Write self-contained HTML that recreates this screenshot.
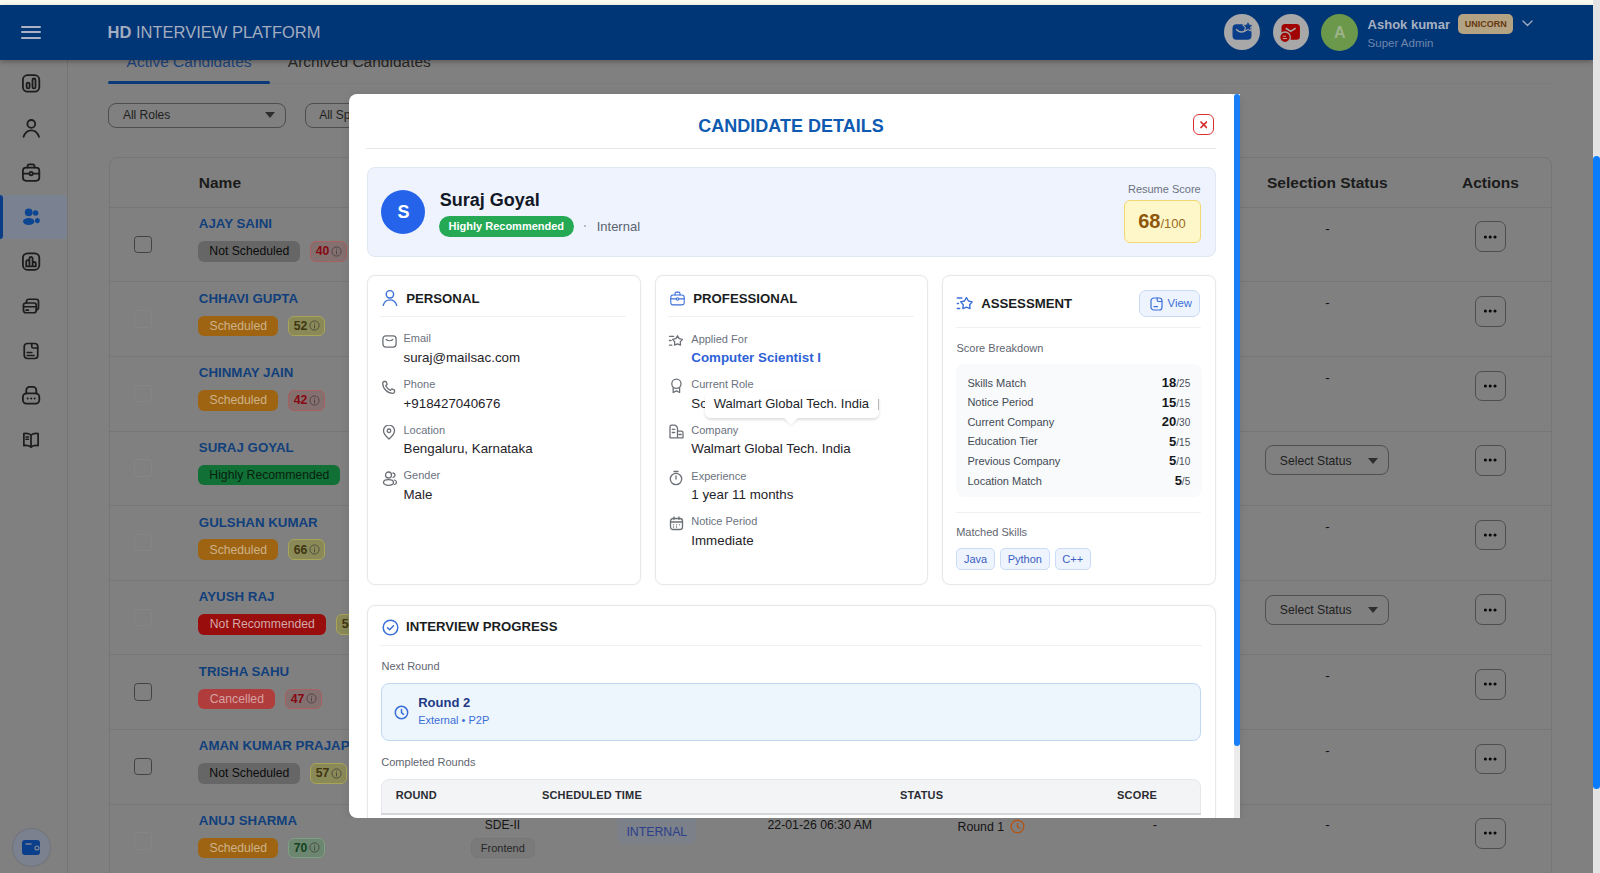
<!DOCTYPE html>
<html><head><meta charset="utf-8"><title>Candidate Details</title>
<style>
html,body{margin:0;padding:0}
body{width:1600px;height:873px;overflow:hidden;position:relative;background:#808080;font-family:"Liberation Sans",sans-serif}
.a{position:absolute;display:block}
.t{position:absolute;line-height:1;white-space:nowrap}
#modal{position:absolute;left:0;top:0;width:1600px;height:818.2px;overflow:hidden}
</style></head><body>
<div id="page">
<div class="a" style="left:67.00px;top:60.00px;width:1.00px;height:813.00px;background:#747474"></div>
<div class="a" style="left:0.00px;top:195.00px;width:67.00px;height:44.00px;background:#7a8291"></div>
<div class="a" style="left:0.00px;top:195.00px;width:3.00px;height:44.00px;background:#0b3d86;border-radius:0 3px 3px 0"></div>
<svg class="a" style="left:14.00px;top:195.00px;" width="36" height="45" viewBox="0 0 36 45" fill="none"><circle cx="14.7" cy="17.3" r="3.9" fill="#0c4591"/><ellipse cx="14.7" cy="26.5" rx="5.7" ry="3.4" fill="#0c4591"/><circle cx="21.6" cy="18" r="2.7" fill="#0c4591"/><ellipse cx="23.4" cy="25.6" rx="2.4" ry="2.7" fill="#0c4591"/></svg>
<svg class="a" style="left:0.00px;top:0.00px;" width="68" height="460" viewBox="0 0 68 460" fill="none"><g stroke="#1c1c1c" stroke-width="1.8" stroke-linecap="round" stroke-linejoin="round"><rect x="22.9" y="75.2" width="16.4" height="16.4" rx="4.6"/><rect x="26.6" y="82.6" width="3" height="5.8" rx="1.5"/><rect x="32.5" y="78.5" width="3" height="9.9" rx="1.5"/><circle cx="31.3" cy="123.9" r="3.9"/><path d="M23.6 136.8c1.4-4.2 4.3-6.5 7.7-6.5s6.3 2.3 7.7 6.5"/><rect x="22.9" y="167.6" width="16.4" height="13.2" rx="3.2"/><path d="M27.6 167.6v-1.6a1.6 1.6 0 0 1 1.6-1.6h3.6a1.6 1.6 0 0 1 1.6 1.6v1.6M23 173.6h16.3"/><circle cx="31.1" cy="173.6" r="1.7" fill="#808080"/><rect x="22.9" y="253.4" width="16.4" height="16.4" rx="4.6"/><path d="M26.2 266.4v-4.6a1.6 1.6 0 0 1 3.2 0v4.6zM29.4 266.4v-8a1.6 1.6 0 0 1 3.2 0v8zM32.6 266.4v-2.8a1.6 1.6 0 0 1 3.2 0v2.8z"/><path d="M26.3 393.4v-3.2a3.3 3.3 0 0 1 3.3-3.3h3.4a3.3 3.3 0 0 1 3.3 3.3v3.2"/><rect x="22.9" y="393.4" width="16.4" height="10.2" rx="3.6"/></g><circle cx="27.7" cy="398.6" r="1" fill="#1c1c1c"/><circle cx="31.2" cy="398.6" r="1" fill="#1c1c1c"/><circle cx="34.6" cy="398.6" r="1" fill="#1c1c1c"/></svg>
<svg class="a" style="left:22.00px;top:297.00px;" width="18" height="18" viewBox="0 0 24 24" fill="none"><rect x="2" y="8" width="17" height="13" rx="3" stroke="#1c1c1c" stroke-width="2.3" stroke-linecap="round" stroke-linejoin="round"/><path d="M6 8V6a3 3 0 0 1 3-3h10a3 3 0 0 1 3 3v8a3 3 0 0 1-3 3M2 13h17M5.5 17.5h3" stroke="#1c1c1c" stroke-width="2.3" stroke-linecap="round" stroke-linejoin="round"/></svg>
<svg class="a" style="left:22.00px;top:341.80px;" width="18" height="18" viewBox="0 0 24 24" fill="none"><rect x="3" y="2" width="18" height="20" rx="4" stroke="#1c1c1c" stroke-width="2.3" stroke-linecap="round" stroke-linejoin="round"/><path d="M13 2v4a2 2 0 0 0 2 2h6M7 14h6M7 18h9" stroke="#1c1c1c" stroke-width="2.3" stroke-linecap="round" stroke-linejoin="round"/></svg>
<svg class="a" style="left:22.00px;top:430.50px;" width="18" height="18" viewBox="0 0 24 24" fill="none"><path d="M12 5.5C9.5 3.5 6 3 2.5 3.5v16c3.5-.5 7 0 9.5 2 2.5-2 6-2.5 9.5-2v-16C18 3 14.5 3.5 12 5.5zM12 5.5v16M5.5 8h3M5.5 11h3" stroke="#1c1c1c" stroke-width="2.3" stroke-linecap="round" stroke-linejoin="round"/></svg>
<div class="a" style="left:11.50px;top:828.00px;width:39.20px;height:38.60px;box-sizing:border-box;background:#7b818f;border-radius:50%;border:1px solid #70747c"></div>
<svg class="a" style="left:21.00px;top:838.00px;" width="20" height="18" viewBox="0 0 20 18" fill="none"><rect x="1" y="2" width="18" height="15" rx="3" fill="#0b3f8c"/><path d="M5 6h5" stroke="#7b8391" stroke-width="1.5" stroke-linecap="round"/><circle cx="16" cy="10" r="2.6" fill="#7b8391"/><circle cx="16" cy="10" r="1.3" fill="#0b3f8c"/></svg>
<div class="t" style="left:126.60px;top:53.88px;font-size:15.5px;font-weight:400;color:#1c437c;">Active Candidates</div>
<div class="t" style="left:287.80px;top:53.88px;font-size:15.5px;font-weight:400;color:#262626;">Archived Candidates</div>
<div class="a" style="left:107.80px;top:82.50px;width:1445.00px;height:1.00px;background:#7c7c7c"></div>
<div class="a" style="left:107.80px;top:81.30px;width:161.80px;height:2.60px;background:#0b397a;border-radius:2px"></div>
<div class="a" style="left:108.40px;top:102.50px;width:177.60px;height:25.00px;box-sizing:border-box;border:1px solid #4e4e4e;border-radius:8px"></div>
<div class="t" style="left:122.90px;top:109.34px;font-size:12px;font-weight:400;color:#1e1e1e;">All Roles</div>
<svg class="a" style="left:264.60px;top:112.00px;" width="10" height="6" viewBox="0 0 10 6" fill="none"><path d="M0 0h10L5 6z" fill="#2e2e2e"/></svg>
<div class="a" style="left:304.70px;top:102.50px;width:177.60px;height:25.00px;box-sizing:border-box;border:1px solid #4e4e4e;border-radius:8px"></div>
<div class="t" style="left:319.20px;top:109.34px;font-size:12px;font-weight:400;color:#1e1e1e;">All Specializations</div>
<svg class="a" style="left:461.00px;top:112.00px;" width="10" height="6" viewBox="0 0 10 6" fill="none"><path d="M0 0h10L5 6z" fill="#2e2e2e"/></svg>
<div class="a" style="left:108.60px;top:156.60px;width:1443.80px;height:760.00px;box-sizing:border-box;border:1px solid #767676;border-radius:8px"></div>
<div class="t" style="left:198.80px;top:174.78px;font-size:15.5px;font-weight:700;color:#1b1b1b;">Name</div>
<div class="t" style="left:1267.00px;top:174.78px;font-size:15.5px;font-weight:700;color:#1b1b1b;">Selection Status</div>
<div class="t" style="left:1462.00px;top:174.78px;font-size:15.5px;font-weight:700;color:#1b1b1b;">Actions</div>
<div class="a" style="left:108.60px;top:206.80px;width:1443.80px;height:1.00px;background:#767676"></div>
<div class="t" style="left:198.80px;top:217.24px;font-size:13.3px;font-weight:700;color:#113f7b;">AJAY SAINI</div>
<div class="a" style="left:133.50px;top:235.50px;width:18.30px;height:17.50px;box-sizing:border-box;border:1.7px solid #424242;border-radius:3.5px"></div>
<div class="a" style="left:198.30px;top:241.00px;width:102.00px;height:20.60px;background:#666666;border-radius:6px"></div>
<div class="t" style="left:-150.70px;width:800px;text-align:center;top:245.17px;font-size:12.2px;font-weight:400;color:#0c0c0c;">Not Scheduled</div>
<div class="a" style="left:310.30px;top:241.00px;width:37.00px;height:20.60px;box-sizing:border-box;background:#857070;border:1px solid #a86060;border-radius:6px"></div>
<div class="t" style="left:315.80px;top:245.17px;font-size:12.2px;font-weight:700;color:#860812;">40</div>
<svg class="a" style="left:331.10px;top:245.60px;opacity:.75" width="11" height="11" viewBox="0 0 11 11" fill="none"><circle cx="5.5" cy="5.5" r="4.6" stroke="#3c3a38" stroke-width="1"/><path d="M5.5 5v3M5.5 3.2v.1" stroke="#3c3a38" stroke-width="1" stroke-linecap="round"/></svg>
<div class="t" style="left:927.40px;width:800px;text-align:center;top:221.67px;font-size:13.5px;font-weight:400;color:#111;">-</div>
<div class="a" style="left:1475.00px;top:221.30px;width:30.70px;height:30.70px;box-sizing:border-box;border:1px solid #4e4e4e;border-radius:7px"></div>
<svg class="a" style="left:1480.00px;top:231.60px;" width="20" height="10" viewBox="0 0 20 10" fill="none"><circle cx="5.4" cy="5" r="1.55" fill="#0a0a0a"/><circle cx="10.2" cy="5" r="1.55" fill="#0a0a0a"/><circle cx="15" cy="5" r="1.55" fill="#0a0a0a"/></svg>
<div class="a" style="left:108.60px;top:281.40px;width:1443.80px;height:1.00px;background:#767676"></div>
<div class="t" style="left:198.80px;top:291.84px;font-size:13.3px;font-weight:700;color:#113f7b;">CHHAVI GUPTA</div>
<div class="a" style="left:133.50px;top:310.10px;width:18.30px;height:17.50px;box-sizing:border-box;border:1.5px solid #858585;border-radius:3px"></div>
<div class="a" style="left:198.30px;top:315.60px;width:80.00px;height:20.60px;background:#9e6411;border-radius:6px"></div>
<div class="t" style="left:-161.70px;width:800px;text-align:center;top:319.77px;font-size:12.2px;font-weight:400;color:#cdb28a;">Scheduled</div>
<div class="a" style="left:288.30px;top:315.60px;width:37.00px;height:20.60px;box-sizing:border-box;background:#8a8958;border:1px solid #a8a458;border-radius:6px"></div>
<div class="t" style="left:293.80px;top:319.77px;font-size:12.2px;font-weight:700;color:#3f3610;">52</div>
<svg class="a" style="left:309.10px;top:320.20px;opacity:.75" width="11" height="11" viewBox="0 0 11 11" fill="none"><circle cx="5.5" cy="5.5" r="4.6" stroke="#3c3a38" stroke-width="1"/><path d="M5.5 5v3M5.5 3.2v.1" stroke="#3c3a38" stroke-width="1" stroke-linecap="round"/></svg>
<div class="t" style="left:927.40px;width:800px;text-align:center;top:296.27px;font-size:13.5px;font-weight:400;color:#111;">-</div>
<div class="a" style="left:1475.00px;top:295.90px;width:30.70px;height:30.70px;box-sizing:border-box;border:1px solid #4e4e4e;border-radius:7px"></div>
<svg class="a" style="left:1480.00px;top:306.20px;" width="20" height="10" viewBox="0 0 20 10" fill="none"><circle cx="5.4" cy="5" r="1.55" fill="#0a0a0a"/><circle cx="10.2" cy="5" r="1.55" fill="#0a0a0a"/><circle cx="15" cy="5" r="1.55" fill="#0a0a0a"/></svg>
<div class="a" style="left:108.60px;top:356.00px;width:1443.80px;height:1.00px;background:#767676"></div>
<div class="t" style="left:198.80px;top:366.44px;font-size:13.3px;font-weight:700;color:#113f7b;">CHINMAY JAIN</div>
<div class="a" style="left:133.50px;top:384.70px;width:18.30px;height:17.50px;box-sizing:border-box;border:1.5px solid #858585;border-radius:3px"></div>
<div class="a" style="left:198.30px;top:390.20px;width:80.00px;height:20.60px;background:#9e6411;border-radius:6px"></div>
<div class="t" style="left:-161.70px;width:800px;text-align:center;top:394.37px;font-size:12.2px;font-weight:400;color:#cdb28a;">Scheduled</div>
<div class="a" style="left:288.30px;top:390.20px;width:37.00px;height:20.60px;box-sizing:border-box;background:#857070;border:1px solid #a86060;border-radius:6px"></div>
<div class="t" style="left:293.80px;top:394.37px;font-size:12.2px;font-weight:700;color:#860812;">42</div>
<svg class="a" style="left:309.10px;top:394.80px;opacity:.75" width="11" height="11" viewBox="0 0 11 11" fill="none"><circle cx="5.5" cy="5.5" r="4.6" stroke="#3c3a38" stroke-width="1"/><path d="M5.5 5v3M5.5 3.2v.1" stroke="#3c3a38" stroke-width="1" stroke-linecap="round"/></svg>
<div class="t" style="left:927.40px;width:800px;text-align:center;top:370.87px;font-size:13.5px;font-weight:400;color:#111;">-</div>
<div class="a" style="left:1475.00px;top:370.50px;width:30.70px;height:30.70px;box-sizing:border-box;border:1px solid #4e4e4e;border-radius:7px"></div>
<svg class="a" style="left:1480.00px;top:380.80px;" width="20" height="10" viewBox="0 0 20 10" fill="none"><circle cx="5.4" cy="5" r="1.55" fill="#0a0a0a"/><circle cx="10.2" cy="5" r="1.55" fill="#0a0a0a"/><circle cx="15" cy="5" r="1.55" fill="#0a0a0a"/></svg>
<div class="a" style="left:108.60px;top:430.60px;width:1443.80px;height:1.00px;background:#767676"></div>
<div class="t" style="left:198.80px;top:441.04px;font-size:13.3px;font-weight:700;color:#113f7b;">SURAJ GOYAL</div>
<div class="a" style="left:133.50px;top:459.30px;width:18.30px;height:17.50px;box-sizing:border-box;border:1.5px solid #858585;border-radius:3px"></div>
<div class="a" style="left:198.30px;top:464.80px;width:142.00px;height:20.60px;background:#117035;border-radius:6px"></div>
<div class="t" style="left:-130.70px;width:800px;text-align:center;top:468.97px;font-size:12.2px;font-weight:400;color:#082010;">Highly Recommended</div>
<div class="a" style="left:1264.70px;top:445.30px;width:124.30px;height:30.20px;box-sizing:border-box;border:1px solid #505050;border-radius:8px"></div>
<div class="t" style="left:1279.80px;top:454.97px;font-size:12.2px;font-weight:400;color:#1e1e1e;">Select Status</div>
<svg class="a" style="left:1368.30px;top:457.90px;" width="10" height="6" viewBox="0 0 10 6" fill="none"><path d="M0 0h10L5 6z" fill="#2e2e2e"/></svg>
<div class="a" style="left:1475.00px;top:445.10px;width:30.70px;height:30.70px;box-sizing:border-box;border:1px solid #4e4e4e;border-radius:7px"></div>
<svg class="a" style="left:1480.00px;top:455.40px;" width="20" height="10" viewBox="0 0 20 10" fill="none"><circle cx="5.4" cy="5" r="1.55" fill="#0a0a0a"/><circle cx="10.2" cy="5" r="1.55" fill="#0a0a0a"/><circle cx="15" cy="5" r="1.55" fill="#0a0a0a"/></svg>
<div class="a" style="left:108.60px;top:505.20px;width:1443.80px;height:1.00px;background:#767676"></div>
<div class="t" style="left:198.80px;top:515.64px;font-size:13.3px;font-weight:700;color:#113f7b;">GULSHAN KUMAR</div>
<div class="a" style="left:133.50px;top:533.90px;width:18.30px;height:17.50px;box-sizing:border-box;border:1.5px solid #858585;border-radius:3px"></div>
<div class="a" style="left:198.30px;top:539.40px;width:80.00px;height:20.60px;background:#9e6411;border-radius:6px"></div>
<div class="t" style="left:-161.70px;width:800px;text-align:center;top:543.57px;font-size:12.2px;font-weight:400;color:#cdb28a;">Scheduled</div>
<div class="a" style="left:288.30px;top:539.40px;width:37.00px;height:20.60px;box-sizing:border-box;background:#8a8958;border:1px solid #a8a458;border-radius:6px"></div>
<div class="t" style="left:293.80px;top:543.57px;font-size:12.2px;font-weight:700;color:#3f3610;">66</div>
<svg class="a" style="left:309.10px;top:544.00px;opacity:.75" width="11" height="11" viewBox="0 0 11 11" fill="none"><circle cx="5.5" cy="5.5" r="4.6" stroke="#3c3a38" stroke-width="1"/><path d="M5.5 5v3M5.5 3.2v.1" stroke="#3c3a38" stroke-width="1" stroke-linecap="round"/></svg>
<div class="t" style="left:927.40px;width:800px;text-align:center;top:520.07px;font-size:13.5px;font-weight:400;color:#111;">-</div>
<div class="a" style="left:1475.00px;top:519.70px;width:30.70px;height:30.70px;box-sizing:border-box;border:1px solid #4e4e4e;border-radius:7px"></div>
<svg class="a" style="left:1480.00px;top:530.00px;" width="20" height="10" viewBox="0 0 20 10" fill="none"><circle cx="5.4" cy="5" r="1.55" fill="#0a0a0a"/><circle cx="10.2" cy="5" r="1.55" fill="#0a0a0a"/><circle cx="15" cy="5" r="1.55" fill="#0a0a0a"/></svg>
<div class="a" style="left:108.60px;top:579.80px;width:1443.80px;height:1.00px;background:#767676"></div>
<div class="t" style="left:198.80px;top:590.24px;font-size:13.3px;font-weight:700;color:#113f7b;">AYUSH RAJ</div>
<div class="a" style="left:133.50px;top:608.50px;width:18.30px;height:17.50px;box-sizing:border-box;border:1.5px solid #858585;border-radius:3px"></div>
<div class="a" style="left:198.30px;top:614.00px;width:128.00px;height:20.60px;background:#9a0d0d;border-radius:6px"></div>
<div class="t" style="left:-137.70px;width:800px;text-align:center;top:618.17px;font-size:12.2px;font-weight:400;color:#d3a9a9;">Not Recommended</div>
<div class="a" style="left:336.30px;top:614.00px;width:37.00px;height:20.60px;box-sizing:border-box;background:#8a8958;border:1px solid #a8a458;border-radius:6px"></div>
<div class="t" style="left:341.80px;top:618.17px;font-size:12.2px;font-weight:700;color:#3f3610;">54</div>
<svg class="a" style="left:357.10px;top:618.60px;opacity:.75" width="11" height="11" viewBox="0 0 11 11" fill="none"><circle cx="5.5" cy="5.5" r="4.6" stroke="#3c3a38" stroke-width="1"/><path d="M5.5 5v3M5.5 3.2v.1" stroke="#3c3a38" stroke-width="1" stroke-linecap="round"/></svg>
<div class="a" style="left:1264.70px;top:594.50px;width:124.30px;height:30.20px;box-sizing:border-box;border:1px solid #505050;border-radius:8px"></div>
<div class="t" style="left:1279.80px;top:604.17px;font-size:12.2px;font-weight:400;color:#1e1e1e;">Select Status</div>
<svg class="a" style="left:1368.30px;top:607.10px;" width="10" height="6" viewBox="0 0 10 6" fill="none"><path d="M0 0h10L5 6z" fill="#2e2e2e"/></svg>
<div class="a" style="left:1475.00px;top:594.30px;width:30.70px;height:30.70px;box-sizing:border-box;border:1px solid #4e4e4e;border-radius:7px"></div>
<svg class="a" style="left:1480.00px;top:604.60px;" width="20" height="10" viewBox="0 0 20 10" fill="none"><circle cx="5.4" cy="5" r="1.55" fill="#0a0a0a"/><circle cx="10.2" cy="5" r="1.55" fill="#0a0a0a"/><circle cx="15" cy="5" r="1.55" fill="#0a0a0a"/></svg>
<div class="a" style="left:108.60px;top:654.40px;width:1443.80px;height:1.00px;background:#767676"></div>
<div class="t" style="left:198.80px;top:664.84px;font-size:13.3px;font-weight:700;color:#113f7b;">TRISHA SAHU</div>
<div class="a" style="left:133.50px;top:683.10px;width:18.30px;height:17.50px;box-sizing:border-box;border:1.7px solid #424242;border-radius:3.5px"></div>
<div class="a" style="left:198.30px;top:688.60px;width:77.00px;height:20.60px;background:#b03c3c;border-radius:6px"></div>
<div class="t" style="left:-163.20px;width:800px;text-align:center;top:692.77px;font-size:12.2px;font-weight:400;color:#d6a2a2;">Cancelled</div>
<div class="a" style="left:285.30px;top:688.60px;width:37.00px;height:20.60px;box-sizing:border-box;background:#857070;border:1px solid #a86060;border-radius:6px"></div>
<div class="t" style="left:290.80px;top:692.77px;font-size:12.2px;font-weight:700;color:#860812;">47</div>
<svg class="a" style="left:306.10px;top:693.20px;opacity:.75" width="11" height="11" viewBox="0 0 11 11" fill="none"><circle cx="5.5" cy="5.5" r="4.6" stroke="#3c3a38" stroke-width="1"/><path d="M5.5 5v3M5.5 3.2v.1" stroke="#3c3a38" stroke-width="1" stroke-linecap="round"/></svg>
<div class="t" style="left:927.40px;width:800px;text-align:center;top:669.27px;font-size:13.5px;font-weight:400;color:#111;">-</div>
<div class="a" style="left:1475.00px;top:668.90px;width:30.70px;height:30.70px;box-sizing:border-box;border:1px solid #4e4e4e;border-radius:7px"></div>
<svg class="a" style="left:1480.00px;top:679.20px;" width="20" height="10" viewBox="0 0 20 10" fill="none"><circle cx="5.4" cy="5" r="1.55" fill="#0a0a0a"/><circle cx="10.2" cy="5" r="1.55" fill="#0a0a0a"/><circle cx="15" cy="5" r="1.55" fill="#0a0a0a"/></svg>
<div class="a" style="left:108.60px;top:729.00px;width:1443.80px;height:1.00px;background:#767676"></div>
<div class="t" style="left:198.80px;top:739.44px;font-size:13.3px;font-weight:700;color:#113f7b;">AMAN KUMAR PRAJAPATI</div>
<div class="a" style="left:133.50px;top:757.70px;width:18.30px;height:17.50px;box-sizing:border-box;border:1.7px solid #424242;border-radius:3.5px"></div>
<div class="a" style="left:198.30px;top:763.20px;width:102.00px;height:20.60px;background:#666666;border-radius:6px"></div>
<div class="t" style="left:-150.70px;width:800px;text-align:center;top:767.37px;font-size:12.2px;font-weight:400;color:#0c0c0c;">Not Scheduled</div>
<div class="a" style="left:310.30px;top:763.20px;width:37.00px;height:20.60px;box-sizing:border-box;background:#8a8958;border:1px solid #a8a458;border-radius:6px"></div>
<div class="t" style="left:315.80px;top:767.37px;font-size:12.2px;font-weight:700;color:#3f3610;">57</div>
<svg class="a" style="left:331.10px;top:767.80px;opacity:.75" width="11" height="11" viewBox="0 0 11 11" fill="none"><circle cx="5.5" cy="5.5" r="4.6" stroke="#3c3a38" stroke-width="1"/><path d="M5.5 5v3M5.5 3.2v.1" stroke="#3c3a38" stroke-width="1" stroke-linecap="round"/></svg>
<div class="t" style="left:927.40px;width:800px;text-align:center;top:743.87px;font-size:13.5px;font-weight:400;color:#111;">-</div>
<div class="a" style="left:1475.00px;top:743.50px;width:30.70px;height:30.70px;box-sizing:border-box;border:1px solid #4e4e4e;border-radius:7px"></div>
<svg class="a" style="left:1480.00px;top:753.80px;" width="20" height="10" viewBox="0 0 20 10" fill="none"><circle cx="5.4" cy="5" r="1.55" fill="#0a0a0a"/><circle cx="10.2" cy="5" r="1.55" fill="#0a0a0a"/><circle cx="15" cy="5" r="1.55" fill="#0a0a0a"/></svg>
<div class="a" style="left:108.60px;top:803.60px;width:1443.80px;height:1.00px;background:#767676"></div>
<div class="t" style="left:198.80px;top:814.04px;font-size:13.3px;font-weight:700;color:#113f7b;">ANUJ SHARMA</div>
<div class="a" style="left:133.50px;top:832.30px;width:18.30px;height:17.50px;box-sizing:border-box;border:1.5px solid #858585;border-radius:3px"></div>
<div class="a" style="left:198.30px;top:837.80px;width:80.00px;height:20.60px;background:#9e6411;border-radius:6px"></div>
<div class="t" style="left:-161.70px;width:800px;text-align:center;top:841.97px;font-size:12.2px;font-weight:400;color:#cdb28a;">Scheduled</div>
<div class="a" style="left:288.30px;top:837.80px;width:37.00px;height:20.60px;box-sizing:border-box;background:#6d8670;border:1px solid #7f9f84;border-radius:6px"></div>
<div class="t" style="left:293.80px;top:841.97px;font-size:12.2px;font-weight:700;color:#11431e;">70</div>
<svg class="a" style="left:309.10px;top:842.40px;opacity:.75" width="11" height="11" viewBox="0 0 11 11" fill="none"><circle cx="5.5" cy="5.5" r="4.6" stroke="#3c3a38" stroke-width="1"/><path d="M5.5 5v3M5.5 3.2v.1" stroke="#3c3a38" stroke-width="1" stroke-linecap="round"/></svg>
<div class="t" style="left:927.40px;width:800px;text-align:center;top:818.47px;font-size:13.5px;font-weight:400;color:#111;">-</div>
<div class="a" style="left:1475.00px;top:818.10px;width:30.70px;height:30.70px;box-sizing:border-box;border:1px solid #4e4e4e;border-radius:7px"></div>
<svg class="a" style="left:1480.00px;top:828.40px;" width="20" height="10" viewBox="0 0 20 10" fill="none"><circle cx="5.4" cy="5" r="1.55" fill="#0a0a0a"/><circle cx="10.2" cy="5" r="1.55" fill="#0a0a0a"/><circle cx="15" cy="5" r="1.55" fill="#0a0a0a"/></svg>
<div class="t" style="left:102.50px;width:800px;text-align:center;top:818.94px;font-size:12px;font-weight:400;color:#161616;">SDE-II</div>
<div class="a" style="left:471.00px;top:838.10px;width:63.70px;height:20.30px;box-sizing:border-box;background:#7a7a7a;border:1px solid #767676;border-radius:6px"></div>
<div class="t" style="left:102.80px;width:800px;text-align:center;top:843.19px;font-size:11px;font-weight:400;color:#262626;">Frontend</div>
<div class="a" style="left:617.20px;top:812.00px;width:79.30px;height:31.80px;background:#7b8089;border-radius:7px"></div>
<div class="t" style="left:256.80px;width:800px;text-align:center;top:826.09px;font-size:12.3px;font-weight:400;color:#2b3f8c;">INTERNAL</div>
<div class="t" style="left:767.50px;top:818.59px;font-size:12.3px;font-weight:400;color:#141414;">22-01-26 06:30 AM</div>
<div class="t" style="left:957.50px;top:820.59px;font-size:12.3px;font-weight:400;color:#141414;">Round 1</div>
<svg class="a" style="left:1010.00px;top:819.00px;" width="15" height="15" viewBox="0 0 15 15" fill="none"><circle cx="7.5" cy="7.5" r="6.3" stroke="#b0561a" stroke-width="1.4"/><path d="M7.5 4.5v3.3l2 1.5" stroke="#b0561a" stroke-width="1.3" stroke-linecap="round"/></svg>
<div class="t" style="left:755.00px;width:800px;text-align:center;top:817.99px;font-size:13px;font-weight:400;color:#141414;">-</div>
</div>
<div id="hdr">
<div class="a" style="left:0.00px;top:0.00px;width:1600.00px;height:4.50px;background:#f9faf0"></div>
<div class="a" style="left:0.00px;top:4.50px;width:1593.00px;height:55.50px;background:#003576;box-shadow:0 2px 5px rgba(0,0,0,.28)"></div>
<div class="a" style="left:21.00px;top:25.80px;width:20.00px;height:2.00px;background:#a9b1c2;border-radius:1px"></div>
<div class="a" style="left:21.00px;top:31.40px;width:20.00px;height:2.00px;background:#a9b1c2;border-radius:1px"></div>
<div class="a" style="left:21.00px;top:36.80px;width:20.00px;height:2.00px;background:#a9b1c2;border-radius:1px"></div>
<div class="t" style="left:107.50px;top:24.13px;font-size:16.5px;font-weight:400;color:#a3adbf;"><b>HD</b> INTERVIEW PLATFORM</div>
<div class="a" style="left:1223.50px;top:14.20px;width:36.00px;height:36.00px;background:#a8a8a8;border-radius:50%"></div>
<svg class="a" style="left:1228.00px;top:20.00px;" width="26" height="24" viewBox="0 0 26 24" fill="none"><rect x="4.5" y="4.3" width="19" height="15.4" rx="4" fill="#0b3e8a"/><path d="M8.6 9.6c2.4 3.1 6.5 3.3 9.2 .6" stroke="#a8a8a8" stroke-width="1.5" stroke-linecap="round"/><path d="M20.00 1.00 L21.76 4.17 L25.33 4.87 L22.85 7.53 L23.29 11.13 L20.00 9.60 L16.71 11.13 L17.15 7.53 L14.67 4.87 L18.24 4.17z" fill="#a8a8a8" stroke="#a8a8a8" stroke-width="1" stroke-linejoin="round"/><path d="M20.00 2.70 L21.12 5.06 L23.71 5.39 L21.81 7.19 L22.29 9.76 L20.00 8.50 L17.71 9.76 L18.19 7.19 L16.29 5.39 L18.88 5.06z" fill="#0b3e8a" stroke="#0b3e8a" stroke-width=".6" stroke-linejoin="round"/></svg>
<div class="a" style="left:1272.70px;top:14.20px;width:36.00px;height:36.00px;background:#a8a8a8;border-radius:50%"></div>
<svg class="a" style="left:1277.00px;top:20.00px;" width="26" height="24" viewBox="0 0 26 24" fill="none"><rect x="4.5" y="4" width="18.4" height="15.7" rx="3.5" fill="#a10303"/><path d="M9.2 8.5l4.5 2.9 4.5-2.9" stroke="#a8a8a8" stroke-width="1.5" stroke-linecap="round" stroke-linejoin="round"/><circle cx="8" cy="17.3" r="5.3" fill="#a10303" stroke="#a8a8a8" stroke-width="1.3"/><path d="M6.2 16.2h2.5M6.2 18.6h3.5" stroke="#c8a0a0" stroke-width="1" stroke-linecap="round"/></svg>
<div class="a" style="left:1321.30px;top:13.60px;width:37.00px;height:37.00px;background:#6b984b;border-radius:50%"></div>
<div class="t" style="left:939.80px;width:800px;text-align:center;top:24.95px;font-size:16px;font-weight:700;color:#9cb38a;">A</div>
<div class="t" style="left:1367.60px;top:17.69px;font-size:13px;font-weight:700;color:#a7b0c1;">Ashok kumar</div>
<div class="t" style="left:1367.60px;top:37.56px;font-size:11.5px;font-weight:400;color:#6f86ad;">Super Admin</div>
<div class="a" style="left:1458.40px;top:14.30px;width:54.60px;height:19.60px;background:#b3a383;border-radius:5px"></div>
<div class="t" style="left:1085.70px;width:800px;text-align:center;top:19.88px;font-size:9px;font-weight:700;color:#66380f;">UNICORN</div>
<svg class="a" style="left:1522.00px;top:20.00px;" width="11" height="7" viewBox="0 0 11 7" fill="none"><path d="M1 1l4.5 4.5L10 1" stroke="#9fa9bb" stroke-width="1.4" stroke-linecap="round" stroke-linejoin="round"/></svg>
<div class="a" style="left:1593.00px;top:0.00px;width:7.00px;height:873.00px;background:#e3e3e3"></div>
<div class="a" style="left:1593.00px;top:155.80px;width:7.00px;height:633.70px;background:#0a7cff;border-radius:3.5px"></div>
</div>
<div id="modal">
<div class="a" style="left:349.00px;top:94.20px;width:891.00px;height:724.00px;background:#fff;border-radius:8px 8px 0 8px;box-shadow:0 2px 10px rgba(0,0,0,.10)"></div>
<div class="a" style="left:1234.00px;top:94.20px;width:6.00px;height:724.00px;background:#ececec"></div>
<div class="a" style="left:1234.00px;top:94.20px;width:6.00px;height:651.40px;background:#1a7ef7;border-radius:3px"></div>
<div class="t" style="left:391.00px;width:800px;text-align:center;top:116.66px;font-size:18px;font-weight:700;color:#0e5ab0;">CANDIDATE DETAILS</div>
<div class="a" style="left:1192.80px;top:114.20px;width:21.30px;height:21.10px;box-sizing:border-box;border:1.8px solid #d63434;border-radius:6px"></div>
<svg class="a" style="left:1199.70px;top:121.00px;" width="7.5" height="7.5" viewBox="0 0 7.5 7.5" fill="none"><path d="M1 1l5.5 5.5M6.5 1L1 6.5" stroke="#d62b2b" stroke-width="1.7" stroke-linecap="round"/></svg>
<div class="a" style="left:366.00px;top:148.00px;width:850.00px;height:1.00px;background:#e9e9e9"></div>
<div class="a" style="left:367.00px;top:167.40px;width:849.00px;height:89.20px;box-sizing:border-box;background:#eef3fd;border:1px solid #e1e8f4;border-radius:8px"></div>
<div class="a" style="left:381.40px;top:190.00px;width:44.00px;height:44.00px;background:#2563eb;border-radius:50%"></div>
<div class="t" style="left:3.40px;width:800px;text-align:center;top:203.26px;font-size:18px;font-weight:700;color:#fff;">S</div>
<div class="t" style="left:439.80px;top:191.36px;font-size:18px;font-weight:700;color:#121826;">Suraj Goyal</div>
<div class="a" style="left:438.90px;top:216.00px;width:134.80px;height:20.80px;background:#25a955;border-radius:11px"></div>
<div class="t" style="left:106.30px;width:800px;text-align:center;top:220.79px;font-size:11px;font-weight:700;color:#fff;">Highly Recommended</div>
<div class="a" style="left:583.80px;top:224.90px;width:2.50px;height:2.50px;background:#a3a8b0;border-radius:50%"></div>
<div class="t" style="left:596.70px;top:219.59px;font-size:13px;font-weight:400;color:#5b6270;">Internal</div>
<div class="t" style="right:399.30px;top:183.89px;font-size:11px;font-weight:400;color:#6b7280;">Resume Score</div>
<div class="a" style="left:1123.90px;top:200.10px;width:77.30px;height:42.60px;box-sizing:border-box;background:#fef7c9;border:1px solid #f2d873;border-radius:6px"></div>
<div class="t" style="left:1138.20px;top:211.07px;font-size:20px;font-weight:700;color:#8d560b;">68<span style="font-size:13px;font-weight:400;color:#9a6b22">/100</span></div>
<div class="a" style="left:367.00px;top:275.30px;width:274.00px;height:309.30px;box-sizing:border-box;background:#fff;border:1px solid #e8e8e8;border-radius:8px;box-shadow:0 0 2px rgba(0,0,0,.05)"></div>
<div class="a" style="left:654.70px;top:275.30px;width:273.60px;height:309.30px;box-sizing:border-box;background:#fff;border:1px solid #e8e8e8;border-radius:8px;box-shadow:0 0 2px rgba(0,0,0,.05)"></div>
<div class="a" style="left:942.30px;top:275.30px;width:273.70px;height:309.30px;box-sizing:border-box;background:#fff;border:1px solid #e8e8e8;border-radius:8px;box-shadow:0 0 2px rgba(0,0,0,.05)"></div>
<svg class="a" style="left:380.00px;top:288.00px;" width="20" height="20" viewBox="0 0 20 20" fill="none"><circle cx="9.9" cy="6.3" r="3.7" stroke="#3b6fd8" stroke-width="1.4"/><path d="M3.2 17.4C4.3 13.6 6.8 11.9 9.9 11.9s5.6 1.7 6.8 5.5" stroke="#3b6fd8" stroke-width="1.4" stroke-linecap="round"/></svg>
<div class="t" style="left:406.20px;top:291.62px;font-size:13.2px;font-weight:700;color:#1a1d22;">PERSONAL</div>
<div class="a" style="left:380.00px;top:316.00px;width:246.00px;height:1.00px;background:#f0f1f3"></div>
<div class="t" style="left:403.50px;top:333.19px;font-size:11px;font-weight:400;color:#6b7280;">Email</div>
<div class="t" style="left:403.50px;top:351.00px;font-size:13.35px;font-weight:400;color:#1f2329;">suraj@mailsac.com</div>
<div class="t" style="left:403.50px;top:378.89px;font-size:11px;font-weight:400;color:#6b7280;">Phone</div>
<div class="t" style="left:403.50px;top:396.70px;font-size:13.35px;font-weight:400;color:#1f2329;">+918427040676</div>
<div class="t" style="left:403.50px;top:424.59px;font-size:11px;font-weight:400;color:#6b7280;">Location</div>
<div class="t" style="left:403.50px;top:442.40px;font-size:13.35px;font-weight:400;color:#1f2329;">Bengaluru, Karnataka</div>
<div class="t" style="left:403.50px;top:470.29px;font-size:11px;font-weight:400;color:#6b7280;">Gender</div>
<div class="t" style="left:403.50px;top:488.10px;font-size:13.35px;font-weight:400;color:#1f2329;">Male</div>
<svg class="a" style="left:381.50px;top:334.50px;" width="15" height="13" viewBox="0 0 15 13" fill="none"><rect x=".9" y=".9" width="13.2" height="11.2" rx="3" stroke="#6b6f76" stroke-width="1.3"/><path d="M4.2 4.5c1.8 1.6 4.8 1.6 6.6 0" stroke="#6b6f76" stroke-width="1.3" stroke-linecap="round"/></svg>
<svg class="a" style="left:381.00px;top:378.50px;" width="16" height="16" viewBox="0 0 16 16" fill="none"><path d="M5 2.5H3.2A1.5 1.5 0 0 0 1.7 4c0 5.5 4.6 10.3 10.3 10.3a1.5 1.5 0 0 0 1.5-1.5v-1.7l-2.6-1.2-1.5 1.5C7.6 10.5 5.6 8.5 4.7 6.7l1.5-1.5z" stroke="#6b6f76" stroke-width="1.3" stroke-linecap="round" stroke-linejoin="round"/></svg>
<svg class="a" style="left:382.00px;top:424.50px;" width="14" height="15" viewBox="0 0 14 15" fill="none"><path d="M7 14s-5.5-4.8-5.5-8.3a5.5 5.5 0 0 1 11 0C12.5 9.2 7 14 7 14z" stroke="#6b6f76" stroke-width="1.3" stroke-linecap="round" stroke-linejoin="round"/><circle cx="7" cy="5.8" r="1.8" stroke="#6b6f76" stroke-width="1.3" stroke-linecap="round" stroke-linejoin="round"/></svg>
<svg class="a" style="left:381.50px;top:470.50px;" width="16" height="15" viewBox="0 0 16 15" fill="none"><circle cx="6.5" cy="4" r="3" stroke="#6b6f76" stroke-width="1.3" stroke-linecap="round" stroke-linejoin="round"/><ellipse cx="6.5" cy="11.5" rx="5" ry="2.8" stroke="#6b6f76" stroke-width="1.3" stroke-linecap="round" stroke-linejoin="round"/><path d="M11 2c1.5.4 2 1.3 2 2.2s-.6 1.7-2 2.1M12.5 9c1.4.5 2 1.4 2 2.3s-.6 1.8-2 2.2" stroke="#6b6f76" stroke-width="1.3" stroke-linecap="round" stroke-linejoin="round"/></svg>
<svg class="a" style="left:668.70px;top:289.50px;" width="17" height="17" viewBox="0 0 24 24" fill="none"><rect x="2.5" y="7" width="19" height="14" rx="3.5" stroke="#3b6fd8" stroke-width="1.5" stroke-linecap="round" stroke-linejoin="round"/><path d="M8.5 7V5a2 2 0 0 1 2-2h3a2 2 0 0 1 2 2v2M2.5 12.5h19" stroke="#3b6fd8" stroke-width="1.5" stroke-linecap="round" stroke-linejoin="round"/><circle cx="12" cy="12.8" r="1.8" fill="#fff" stroke="#3b6fd8" stroke-width="1.5" stroke-linecap="round" stroke-linejoin="round"/></svg>
<div class="t" style="left:693.30px;top:291.62px;font-size:13.2px;font-weight:700;color:#1a1d22;">PROFESSIONAL</div>
<div class="a" style="left:668.00px;top:316.00px;width:246.00px;height:1.00px;background:#f0f1f3"></div>
<div class="t" style="left:691.30px;top:333.79px;font-size:11px;font-weight:400;color:#6b7280;">Applied For</div>
<div class="t" style="left:691.30px;top:379.39px;font-size:11px;font-weight:400;color:#6b7280;">Current Role</div>
<div class="t" style="left:691.30px;top:424.99px;font-size:11px;font-weight:400;color:#6b7280;">Company</div>
<div class="t" style="left:691.30px;top:442.40px;font-size:13.35px;font-weight:400;color:#1f2329;">Walmart Global Tech. India</div>
<div class="t" style="left:691.30px;top:470.59px;font-size:11px;font-weight:400;color:#6b7280;">Experience</div>
<div class="t" style="left:691.30px;top:488.00px;font-size:13.35px;font-weight:400;color:#1f2329;">1 year 11 months</div>
<div class="t" style="left:691.30px;top:516.19px;font-size:11px;font-weight:400;color:#6b7280;">Notice Period</div>
<div class="t" style="left:691.30px;top:533.60px;font-size:13.35px;font-weight:400;color:#1f2329;">Immediate</div>
<div class="t" style="left:691.30px;top:351.00px;font-size:13.35px;font-weight:700;color:#2f62d6;">Computer Scientist I</div>
<div class="t" style="left:691.30px;top:396.80px;font-size:13.35px;font-weight:400;color:#1f2329;">Software Engineer I</div>
<svg class="a" style="left:664.00px;top:328.00px;" width="26" height="24" viewBox="0 0 26 24" fill="none"><path d="M13.50 7.80 L15.20 10.55 L18.35 11.32 L16.26 13.80 L16.50 17.03 L13.50 15.80 L10.50 17.03 L10.74 13.80 L8.65 11.32 L11.80 10.55z" stroke="#6b6f76" stroke-width="1.3" stroke-linejoin="round"/><path d="M5.5 8.3h4.2M5.5 12.5h1.6M5.5 17.2h2.3" stroke="#6b6f76" stroke-width="1.3" stroke-linecap="round"/></svg>
<svg class="a" style="left:664.00px;top:372.00px;" width="26" height="26" viewBox="0 0 26 26" fill="none"><circle cx="12.4" cy="11.7" r="4.6" stroke="#6b6f76" stroke-width="1.3" stroke-linecap="round" stroke-linejoin="round"/><path d="M9.2 15.3v5.2l3.2-1.6 3.2 1.6v-5.2" stroke="#6b6f76" stroke-width="1.3" stroke-linecap="round" stroke-linejoin="round"/></svg>
<svg class="a" style="left:664.00px;top:418.00px;" width="26" height="26" viewBox="0 0 26 26" fill="none"><path d="M6 19.8V8.8a1.6 1.6 0 0 1 1.6-1.6h2.6c1.6 0 3.3 1.6 3.3 3.3v9.3zM13.5 13.2h3.9a1.6 1.6 0 0 1 1.6 1.6v5H13.5M8.3 11.3h2.4M8.3 14.5h2.4M15 16.5h2.2" stroke="#6b6f76" stroke-width="1.3" stroke-linecap="round" stroke-linejoin="round"/></svg>
<svg class="a" style="left:669.00px;top:469.50px;" width="14" height="16" viewBox="0 0 14 16" fill="none"><circle cx="7" cy="9" r="5.7" stroke="#6b6f76" stroke-width="1.3" stroke-linecap="round" stroke-linejoin="round"/><path d="M7 6v3M5 1.5h4" stroke="#6b6f76" stroke-width="1.3" stroke-linecap="round" stroke-linejoin="round"/></svg>
<svg class="a" style="left:668.50px;top:515.50px;" width="15" height="15" viewBox="0 0 15 15" fill="none"><rect x="1.5" y="2.5" width="12" height="11" rx="2.5" stroke="#6b6f76" stroke-width="1.3" stroke-linecap="round" stroke-linejoin="round"/><path d="M1.5 6h12M5 1v2.5M10 1v2.5M4.5 8.8h.1M7.5 8.8h.1M10.5 8.8h.1M4.5 11h.1M7.5 11h.1" stroke="#6b6f76" stroke-width="1.3" stroke-linecap="round" stroke-linejoin="round"/></svg>
<div class="a" style="left:704.60px;top:391.50px;width:174.20px;height:26.50px;background:#fff;border-radius:6px;box-shadow:0 2px 3px rgba(0,0,0,.13),0 0 1px rgba(0,0,0,.06)"></div>
<svg class="a" style="left:784.40px;top:417.50px;filter:drop-shadow(0 1px 1px rgba(0,0,0,.1))" width="14" height="7" viewBox="0 0 14 7" fill="none"><path d="M0 0h14L7 7z" fill="#fff"/></svg>
<div class="a" style="left:704.60px;top:409.00px;width:174.20px;height:9.00px;background:#fff;border-radius:0 0 6px 6px"></div>
<div class="t" style="left:713.70px;top:397.19px;font-size:13px;font-weight:400;color:#22252a;">Walmart Global Tech. India</div>
<div class="a" style="left:877.80px;top:398.50px;width:1.20px;height:11.00px;background:#b4b8bd"></div>
<svg class="a" style="left:950.00px;top:290.00px;" width="30" height="26" viewBox="0 0 30 26" fill="none"><path d="M16.45 7.70 L18.45 11.00 L22.20 11.88 L19.68 14.80 L20.01 18.64 L16.45 17.15 L12.89 18.64 L13.22 14.80 L10.70 11.88 L14.45 11.00z" stroke="#3b6fd8" stroke-width="1.4" stroke-linejoin="round"/><path d="M7.3 8h4.6M7.3 13.5h1.2M7.3 18.5h2.4" stroke="#3b6fd8" stroke-width="1.4" stroke-linecap="round"/></svg>
<div class="t" style="left:981.20px;top:296.82px;font-size:13.2px;font-weight:700;color:#1a1d22;">ASSESSMENT</div>
<div class="a" style="left:1139.30px;top:289.60px;width:61.20px;height:27.20px;box-sizing:border-box;background:#eef4fd;border:1px solid #c8daf5;border-radius:7px"></div>
<svg class="a" style="left:1149.50px;top:296.50px;" width="13" height="14" viewBox="0 0 13 14" fill="none"><rect x="1" y="1" width="11" height="12" rx="2.8" stroke="#3b6fd8" stroke-width="1.2"/><path d="M7.2 1.2v1.8a1.5 1.5 0 0 0 1.5 1.5h3M4 9.7h3.5" stroke="#3b6fd8" stroke-width="1.2" stroke-linecap="round"/></svg>
<div class="t" style="left:1167.60px;top:297.73px;font-size:11.3px;font-weight:400;color:#3a6dd6;">View</div>
<div class="a" style="left:956.00px;top:327.20px;width:245.00px;height:1.00px;background:#f0f1f3"></div>
<div class="t" style="left:956.50px;top:343.19px;font-size:11px;font-weight:400;color:#5f6570;">Score Breakdown</div>
<div class="a" style="left:956.00px;top:364.20px;width:245.50px;height:133.30px;background:#f8fafc;border-radius:8px"></div>
<div class="t" style="left:967.40px;top:377.69px;font-size:11px;font-weight:400;color:#444a54;">Skills Match</div>
<div class="t" style="right:409.80px;top:375.99px;font-size:13px;font-weight:700;color:#16181c;">18<span style="font-size:10px;font-weight:400;color:#4a4f57">/25</span></div>
<div class="t" style="left:967.40px;top:397.27px;font-size:11px;font-weight:400;color:#444a54;">Notice Period</div>
<div class="t" style="right:409.80px;top:395.57px;font-size:13px;font-weight:700;color:#16181c;">15<span style="font-size:10px;font-weight:400;color:#4a4f57">/15</span></div>
<div class="t" style="left:967.40px;top:416.85px;font-size:11px;font-weight:400;color:#444a54;">Current Company</div>
<div class="t" style="right:409.80px;top:415.15px;font-size:13px;font-weight:700;color:#16181c;">20<span style="font-size:10px;font-weight:400;color:#4a4f57">/30</span></div>
<div class="t" style="left:967.40px;top:436.43px;font-size:11px;font-weight:400;color:#444a54;">Education Tier</div>
<div class="t" style="right:409.80px;top:434.73px;font-size:13px;font-weight:700;color:#16181c;">5<span style="font-size:10px;font-weight:400;color:#4a4f57">/15</span></div>
<div class="t" style="left:967.40px;top:456.01px;font-size:11px;font-weight:400;color:#444a54;">Previous Company</div>
<div class="t" style="right:409.80px;top:454.31px;font-size:13px;font-weight:700;color:#16181c;">5<span style="font-size:10px;font-weight:400;color:#4a4f57">/10</span></div>
<div class="t" style="left:967.40px;top:475.59px;font-size:11px;font-weight:400;color:#444a54;">Location Match</div>
<div class="t" style="right:409.80px;top:473.89px;font-size:13px;font-weight:700;color:#16181c;">5<span style="font-size:10px;font-weight:400;color:#4a4f57">/5</span></div>
<div class="a" style="left:956.00px;top:511.70px;width:245.00px;height:1.00px;background:#f0f1f3"></div>
<div class="t" style="left:956.20px;top:526.99px;font-size:11px;font-weight:400;color:#5f6570;">Matched Skills</div>
<div class="a" style="left:956.30px;top:548.10px;width:38.50px;height:22.40px;box-sizing:border-box;background:#eef4fd;border:1px solid #c9dbf6;border-radius:5px"></div>
<div class="t" style="left:575.55px;width:800px;text-align:center;top:553.69px;font-size:11px;font-weight:400;color:#3a5ec2;">Java</div>
<div class="a" style="left:1000.00px;top:548.10px;width:49.60px;height:22.40px;box-sizing:border-box;background:#eef4fd;border:1px solid #c9dbf6;border-radius:5px"></div>
<div class="t" style="left:624.80px;width:800px;text-align:center;top:553.69px;font-size:11px;font-weight:400;color:#3a5ec2;">Python</div>
<div class="a" style="left:1055.00px;top:548.10px;width:35.50px;height:22.40px;box-sizing:border-box;background:#eef4fd;border:1px solid #c9dbf6;border-radius:5px"></div>
<div class="t" style="left:672.75px;width:800px;text-align:center;top:553.69px;font-size:11px;font-weight:400;color:#3a5ec2;">C++</div>
<div class="a" style="left:367.00px;top:604.90px;width:849.00px;height:300.00px;box-sizing:border-box;background:#fff;border:1px solid #e8e8e8;border-radius:8px;box-shadow:0 0 2px rgba(0,0,0,.05)"></div>
<svg class="a" style="left:381.50px;top:618.50px;" width="17" height="17" viewBox="0 0 17 17" fill="none"><circle cx="8.5" cy="8.5" r="7.3" stroke="#3b6fd8" stroke-width="1.5" stroke-linecap="round" stroke-linejoin="round"/><path d="M5.5 8.8l2.1 2 3.9-4" stroke="#3b6fd8" stroke-width="1.5" stroke-linecap="round" stroke-linejoin="round"/></svg>
<div class="t" style="left:406.00px;top:620.22px;font-size:13.2px;font-weight:700;color:#1a1d22;">INTERVIEW PROGRESS</div>
<div class="a" style="left:380.00px;top:645.20px;width:822.00px;height:1.00px;background:#f0f1f3"></div>
<div class="t" style="left:381.50px;top:661.29px;font-size:11px;font-weight:400;color:#5f6570;">Next Round</div>
<div class="a" style="left:380.80px;top:682.50px;width:820.20px;height:58.90px;box-sizing:border-box;background:#edf5fd;border:1px solid #c0d7f3;border-radius:8px"></div>
<svg class="a" style="left:393.50px;top:704.50px;" width="15" height="15" viewBox="0 0 15 15" fill="none"><circle cx="7.5" cy="7.5" r="6.2" stroke="#3b6fd8" stroke-width="1.5" stroke-linecap="round" stroke-linejoin="round"/><path d="M7.5 4.5v3.2l2 1.6" stroke="#3b6fd8" stroke-width="1.5" stroke-linecap="round" stroke-linejoin="round"/></svg>
<div class="t" style="left:418.20px;top:695.89px;font-size:13px;font-weight:700;color:#1f3a86;">Round 2</div>
<div class="t" style="left:418.20px;top:714.99px;font-size:11px;font-weight:400;color:#3b6fd8;">External &bull; P2P</div>
<div class="t" style="left:381.30px;top:757.39px;font-size:11px;font-weight:400;color:#5f6570;">Completed Rounds</div>
<div class="a" style="left:381.00px;top:778.80px;width:819.50px;height:60.00px;box-sizing:border-box;background:#f3f4f6;border:1px solid #e5e7eb;border-radius:8px 8px 0 0"></div>
<div class="a" style="left:381.00px;top:813.00px;width:819.50px;height:2.20px;background:#d4d6da"></div>
<div class="a" style="left:381.00px;top:815.20px;width:819.50px;height:3.00px;background:#fff"></div>
<div class="t" style="left:395.70px;top:790.29px;font-size:11px;font-weight:700;color:#2a2d33;letter-spacing:.15px">ROUND</div>
<div class="t" style="left:542.00px;top:790.29px;font-size:11px;font-weight:700;color:#2a2d33;letter-spacing:.15px">SCHEDULED TIME</div>
<div class="t" style="left:899.90px;top:790.29px;font-size:11px;font-weight:700;color:#2a2d33;letter-spacing:.15px">STATUS</div>
<div class="t" style="left:1117.10px;top:790.29px;font-size:11px;font-weight:700;color:#2a2d33;letter-spacing:.15px">SCORE</div>
</div>
</body></html>
